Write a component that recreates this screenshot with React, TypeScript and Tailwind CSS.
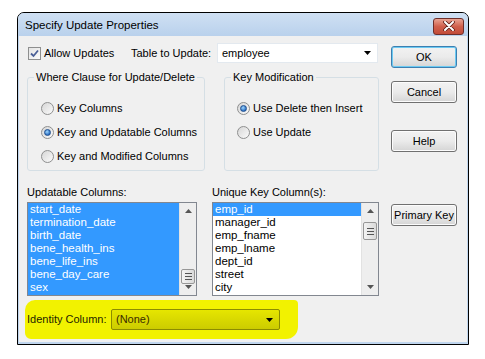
import { clsx } from 'clsx';

const FONT = { fontFamily: '"Liberation Sans", Arial, sans-serif' };

const UPDATABLE = ['start_date', 'termination_date', 'birth_date', 'bene_health_ins', 'bene_life_ins', 'bene_day_care', 'sex'];
const UNIQUE_KEYS = ['emp_id', 'manager_id', 'emp_fname', 'emp_lname', 'dept_id', 'street', 'city'];

function Radio({ checked, label }: { checked?: boolean; label: string }) {
  return (
    <div className="flex items-center gap-[3px] h-[13px]">
      <span className="w-[13px] h-[13px] rounded-full border border-[#8e8f8f] bg-gradient-to-br from-[#d6d6d6] to-[#fbfbfb] flex items-center justify-center shrink-0">
        {checked && (
          <span className="w-[7px] h-[7px] rounded-full bg-[radial-gradient(circle_at_40%_35%,#9fd8ff,#2c6fc2_70%)] border border-[#1f4f8f]" />
        )}
      </span>
      <span className="text-[11px] leading-[13px] text-black">{label}</span>
    </div>
  );
}

function Button({ label, isDefault }: { label: string; isDefault?: boolean }) {
  return (
    <div
      className={clsx(
        'w-[66px] h-[22px] rounded-[3px] border flex items-center justify-center text-[11px] text-black bg-gradient-to-b from-[#f2f2f2] via-[#ebebeb] to-[#d5d5d5]',
        isDefault ? 'border-[#3c7fb1] shadow-[inset_0_0_0_1px_#6ccaf2]' : 'border-[#707070] shadow-[inset_0_0_0_1px_#fcfcfc]',
      )}
    >
      {label}
    </div>
  );
}

function Arrow({ up, color = '#000' }: { up?: boolean; color?: string }) {
  return (
    <svg width="7" height="4" viewBox="0 0 7 4">
      <path d={up ? 'M0 4 L3.5 0 L7 4 Z' : 'M0 0 L7 0 L3.5 4 Z'} fill={color} />
    </svg>
  );
}

function Scrollbar({ thumbTop, thumbHeight }: { thumbTop: number; thumbHeight: number }) {
  return (
    <div className="relative w-[17px] h-full bg-[#eeeeee] border-l border-[#e2e2e2] flex flex-col items-center justify-between py-[6px]">
      <Arrow up color="#555" />
      <Arrow color="#555" />
      <div
        className="absolute left-[1px] w-[14px] rounded-[2px] border border-[#979797] bg-gradient-to-r from-[#f3f3f3] to-[#dadada] flex flex-col items-center justify-center gap-[2px]"
        style={{ top: thumbTop, height: thumbHeight }}
      >
        <span className="w-[7px] h-px bg-[#555]" />
        <span className="w-[7px] h-px bg-[#555]" />
        <span className="w-[7px] h-px bg-[#555]" />
      </div>
    </div>
  );
}

function Group({ title, className, children }: { title: string; className?: string; children: React.ReactNode }) {
  return (
    <fieldset className={clsx('border border-[#d5dfe5] rounded-[3px] h-[101px] -mt-[7px]', className)}>
      <legend className="ml-[6px] px-[2px] text-[11px] leading-[14px] text-black">{title}</legend>
      {children}
    </fieldset>
  );
}

export default function App() {
  return (
    <div className="w-[485px] h-[359px] bg-white pt-[12px] pl-[17px] whitespace-nowrap" style={FONT}>
      <div className="w-[452px] h-[333px] border border-black rounded-t-[7px] bg-[#bfd5ee] flex flex-col overflow-hidden">
        {/* Title bar */}
        <div className="h-[23px] flex items-center justify-between pl-[7px] pr-[4px] bg-gradient-to-b from-[#cfe0f3] to-[#b9d1ec]">
          <span className="text-[11.5px] text-black pt-[2px]">Specify Update Properties</span>
          <div className="w-[31px] h-[17px] mt-[3px] rounded-[3px] border border-[#6d2e2a] bg-gradient-to-b from-[#e8a393] via-[#d0604d] to-[#c24a37] flex items-center justify-center">
            <svg width="12" height="10" viewBox="0 0 12 10">
              <path d="M2 1 L10 9 M10 1 L2 9" stroke="#5a1d16" strokeWidth="3.6" strokeLinecap="round" />
              <path d="M2 1 L10 9 M10 1 L2 9" stroke="#fff" strokeWidth="2" strokeLinecap="round" />
            </svg>
          </div>
        </div>

        {/* Client area */}
        <div className="flex-1 mx-[1px] mb-[2px] bg-[#f0f0f0] flex pl-[8px] pr-[11px] pt-[7px]">
          {/* Left column */}
          <div className="w-[352px] flex flex-col">
            <div className="h-[20px] flex items-center">
              <div className="flex items-center gap-[3px] w-[104px] pl-[1px]">
                <span className="w-[13px] h-[13px] border border-[#8e8f8f] bg-gradient-to-br from-[#e4e4e4] to-[#fafafa] flex items-center justify-center">
                  <svg width="9" height="9" viewBox="0 0 9 9">
                    <path d="M1 4.5 L3.5 7 L8 1.5" stroke="#4a5f97" strokeWidth="1.8" fill="none" />
                  </svg>
                </span>
                <span className="text-[11px] text-black">Allow Updates</span>
              </div>
              <span className="text-[11px] text-black w-[86px]">Table to Update:</span>
              <div className="w-[161px] h-[20px] bg-white border border-[#e3e9ef] flex items-center justify-between pl-[4px] pr-[6px]">
                <span className="text-[11px] text-black">employee</span>
                <Arrow />
              </div>
            </div>

            <div className="flex gap-[19px] mt-[14px]">
              <Group title="Where Clause for Update/Delete" className="w-[178px]">
                <div className="flex flex-col gap-[11px] pl-[13px] pt-[18px]">
                  <Radio label="Key Columns" />
                  <Radio checked label="Key and Updatable Columns" />
                  <Radio label="Key and Modified Columns" />
                </div>
              </Group>
              <Group title="Key Modification" className="w-[155px]">
                <div className="flex flex-col gap-[11px] pl-[12px] pt-[18px]">
                  <Radio checked label="Use Delete then Insert" />
                  <Radio label="Use Update" />
                </div>
              </Group>
            </div>

            <div className="flex gap-[15px] mt-[14px]">
              <div className="flex flex-col">
                <span className="text-[11px] text-black h-[17px] leading-[14px]">Updatable Columns:</span>
                <div className="w-[170px] h-[94px] border border-[#828790] bg-[#3399ff] flex">
                  <div className="flex-1 flex flex-col pl-[2px]">
                    {UPDATABLE.map((c) => (
                      <span key={c} className="h-[13px] leading-[13px] text-[11.5px] text-white">
                        {c}
                      </span>
                    ))}
                  </div>
                  <Scrollbar thumbTop={66} thumbHeight={15} />
                </div>
              </div>
              <div className="flex flex-col">
                <span className="text-[11px] text-black h-[17px] leading-[14px]">Unique Key Column(s):</span>
                <div className="w-[167px] h-[94px] border border-[#828790] bg-white flex">
                  <div className="flex-1 flex flex-col">
                    {UNIQUE_KEYS.map((c, i) => (
                      <span
                        key={c}
                        className={clsx(
                          'h-[13px] leading-[13px] text-[11.5px] pl-[2px]',
                          i === 0 ? 'bg-[#3399ff] text-white' : 'text-black',
                        )}
                      >
                        {c}
                      </span>
                    ))}
                  </div>
                  <Scrollbar thumbTop={19} thumbHeight={18} />
                </div>
              </div>
            </div>

            {/* Identity column, marked with a highlighter */}
            <div className="mt-[4px] -ml-[2px] w-[273px] h-[39px] bg-[#f2f200] rounded-tl-[10px] rounded-tr-[4px] rounded-br-[12px] rounded-bl-[6px] flex items-center pl-[2px]">
              <span className="text-[11px] text-[#1e1e00] w-[84px]">Identity Column:</span>
              <div className="w-[169px] h-[21px] rounded-[2px] border border-[#8c8c00] bg-gradient-to-b from-[#e6e600] to-[#cccc00] flex items-center justify-between pl-[4px] pr-[6px]">
                <span className="text-[11px] text-[#3a2a00]">(None)</span>
                <Arrow />
              </div>
            </div>
          </div>

          {/* Right column buttons */}
          <div className="flex flex-col ml-[12px] pt-[3px]">
            <Button isDefault label="OK" />
            <div className="mt-[13px]">
              <Button label="Cancel" />
            </div>
            <div className="mt-[27px]">
              <Button label="Help" />
            </div>
            <div className="mt-[52px]">
              <Button label="Primary Key" />
            </div>
          </div>
        </div>
      </div>
    </div>
  );
}
